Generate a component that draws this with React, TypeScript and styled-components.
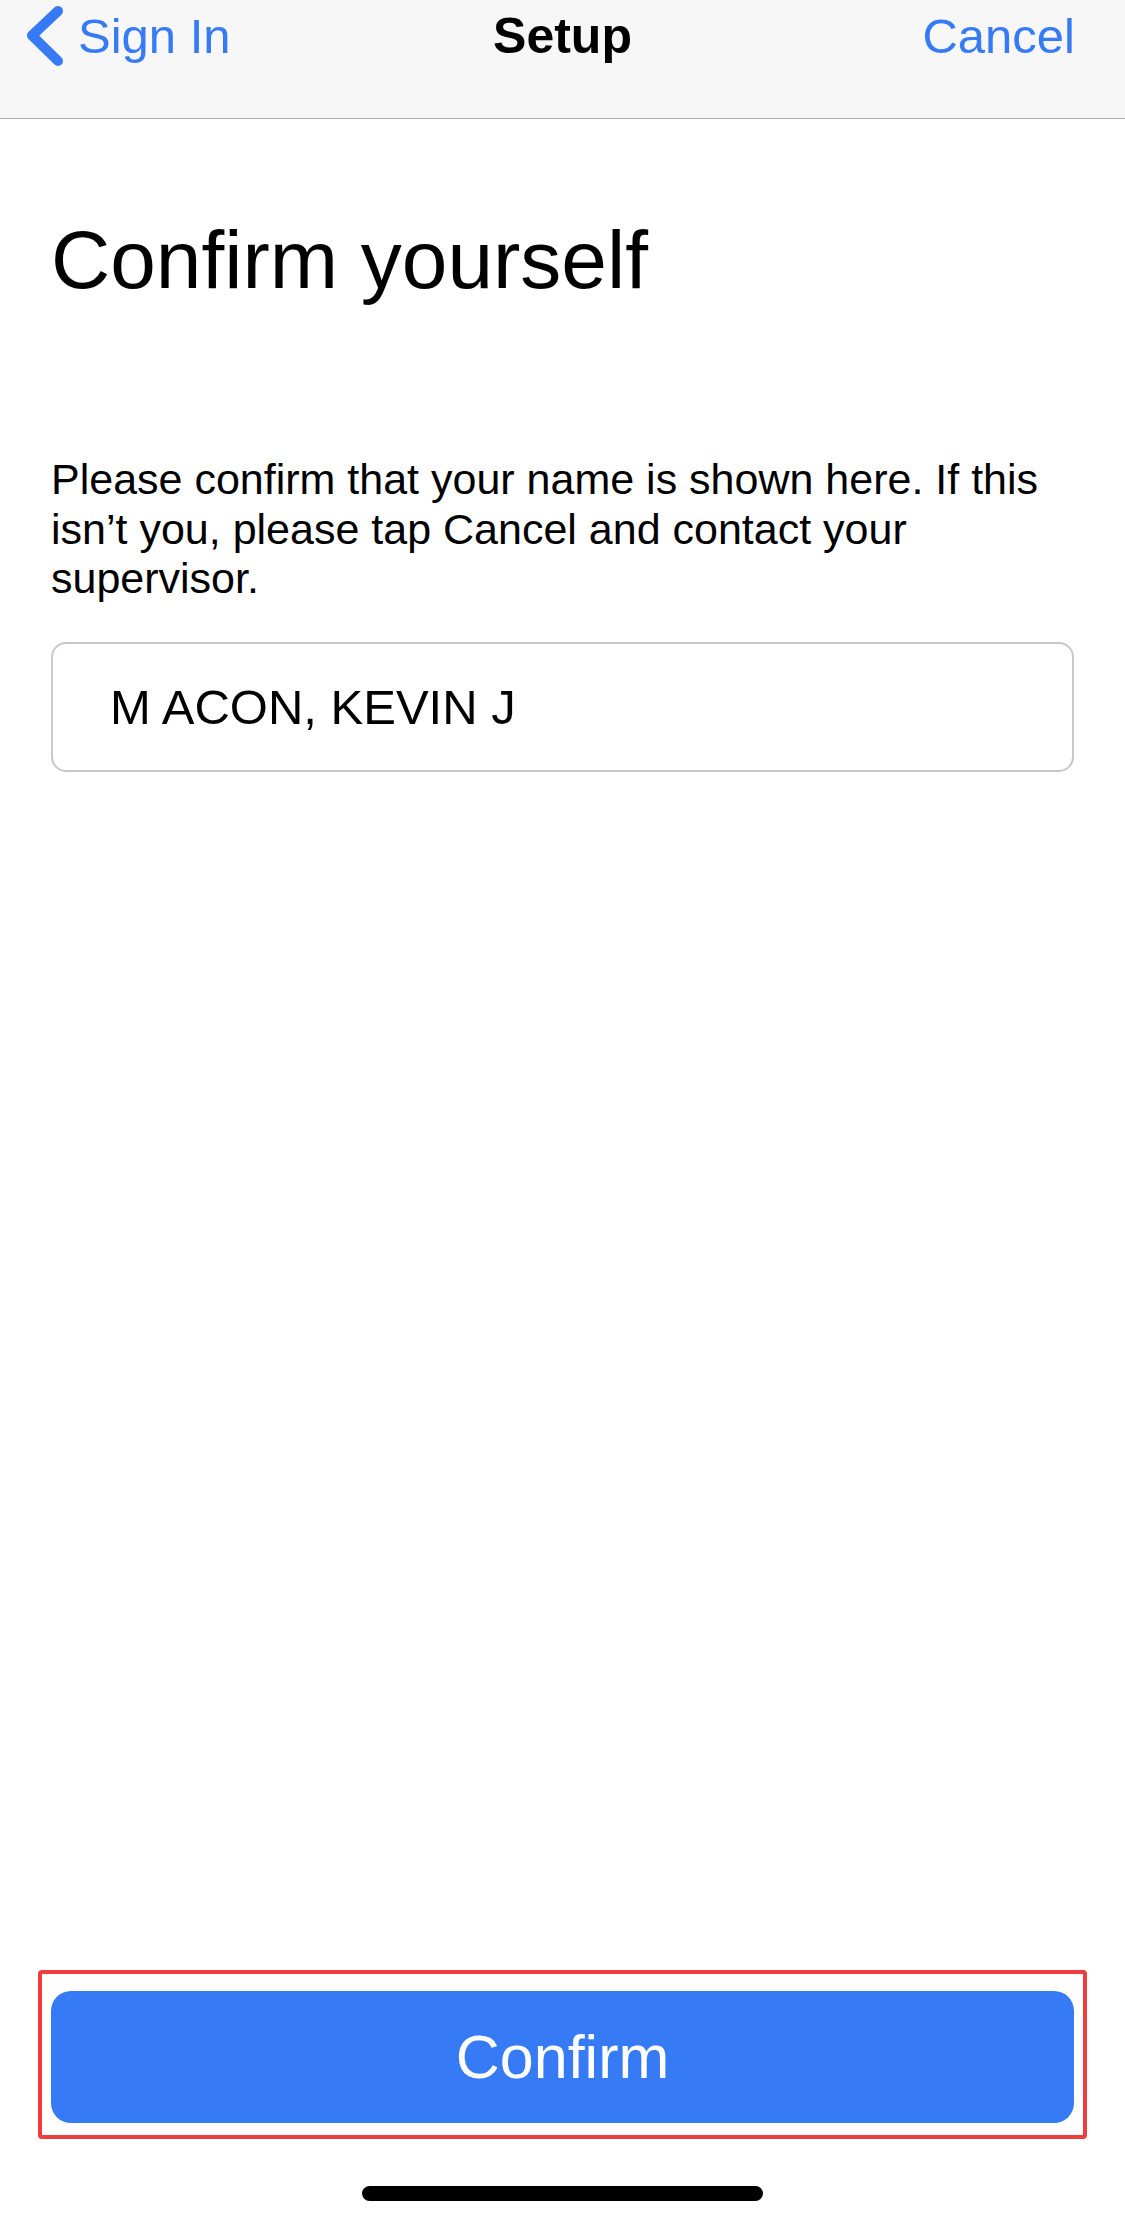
import styled, { createGlobalStyle } from 'styled-components'

const GlobalStyle = createGlobalStyle`
  html, body {
    margin: 0;
    padding: 0;
    background: #ffffff;
  }
  body {
    font-family: "Liberation Sans", Arial, sans-serif;
    color: #000000;
  }
  * {
    box-sizing: border-box;
  }
`

const BLUE = '#367af5'

const Page = styled.div`
  display: flex;
  flex-direction: column;
  width: 1125px;
  height: 2225px;
  background: #ffffff;
`

const NavBar = styled.header`
  display: grid;
  grid-template-columns: 1fr auto 1fr;
  align-items: start;
  height: 119px;
  padding: 6px 50px 0 50px;
  background: #f7f7f7;
  border-bottom: 1px solid #ababab;
`

const NavButton = styled.div<{ align?: 'left' | 'right' }>`
  display: flex;
  align-items: flex-start;
  justify-content: ${({ align = 'left' }) =>
    align === 'right' ? 'flex-end' : 'flex-start'};
  color: ${BLUE};
  font-size: 49px;
  line-height: 60px;
  cursor: pointer;
`

const BackChevron = styled.svg`
  display: block;
  margin: -4px 10px 0 -28px;
  flex-shrink: 0;
`

const NavTitle = styled.div`
  font-size: 50px;
  line-height: 60px;
  font-weight: 700;
  color: #000000;
`

const Main = styled.main`
  flex: 1;
  display: flex;
  flex-direction: column;
  padding: 0 51px;
`

const Title = styled.h1`
  margin: 92px 0 0;
  font-size: 82px;
  line-height: 98px;
  font-weight: 400;
`

const Description = styled.p`
  margin: 146px 0 0;
  font-size: 43px;
  line-height: 49.5px;
`

const NameField = styled.div`
  display: flex;
  align-items: center;
  height: 130px;
  margin-top: 38px;
  padding-left: 57px;
  border: 2px solid #c8c8c8;
  border-radius: 15px;
  font-size: 49px;
`

const Footer = styled.footer`
  display: flex;
  flex-direction: column;
  align-items: center;
  gap: 47px;
  padding-bottom: 24px;
`

const ButtonFrame = styled.div`
  width: 1049px;
  padding: 17px 9px 12px;
  border: 4px solid #ef3d3d;
  border-radius: 4px;
`

const PrimaryButton = styled.button`
  display: flex;
  align-items: center;
  justify-content: center;
  width: 100%;
  height: 132px;
  border: none;
  border-radius: 20px;
  background: ${BLUE};
  color: #ffffff;
  font-family: inherit;
  font-size: 61px;
  cursor: pointer;
`

const HomeIndicator = styled.div`
  width: 401px;
  height: 15px;
  border-radius: 8px;
  background: #000000;
`

const App = () => {
  return (
    <>
      <GlobalStyle />
      <Page>
        <NavBar>
          <NavButton>
            <BackChevron width="46" height="66" viewBox="0 0 46 66">
              <path
                d="M36 9 L10 33.5 L36 59"
                fill="none"
                stroke={BLUE}
                strokeWidth="10"
                strokeLinecap="round"
                strokeLinejoin="round"
              />
            </BackChevron>
            Sign In
          </NavButton>
          <NavTitle>Setup</NavTitle>
          <NavButton align="right">Cancel</NavButton>
        </NavBar>
        <Main>
          <Title>Confirm yourself</Title>
          <Description>
            Please confirm that your name is shown here. If this isn’t you,
            please tap Cancel and contact your supervisor.
          </Description>
          <NameField>M ACON, KEVIN J</NameField>
        </Main>
        <Footer>
          <ButtonFrame>
            <PrimaryButton>Confirm</PrimaryButton>
          </ButtonFrame>
          <HomeIndicator />
        </Footer>
      </Page>
    </>
  )
}

export default App
